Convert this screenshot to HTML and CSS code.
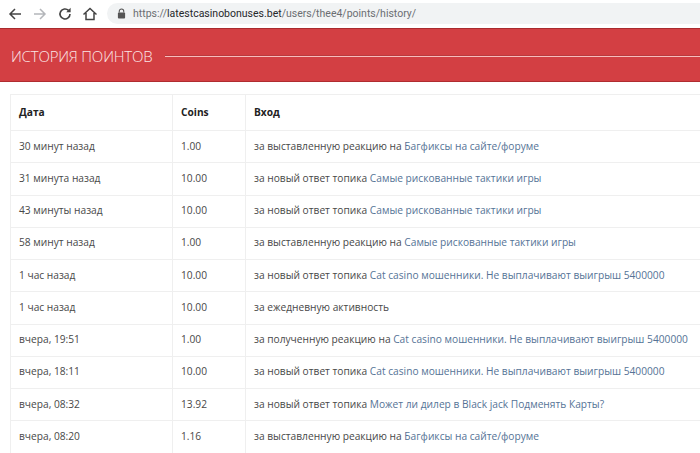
FILE: index.html
```html
<!DOCTYPE html>
<html lang="ru">
<head>
<meta charset="utf-8">
<title>История поинтов</title>
<link rel="stylesheet" href="styles.css">
</head>
<body>
<div class="toolbar">
  <div class="nav">
    <svg class="ico" viewBox="0 0 16 16"><path d="M14 8H3M8 3 3 8l5 5" fill="none" stroke="#444" stroke-width="1.5"/></svg>
    <svg class="ico" viewBox="0 0 16 16"><path d="M2 8h11M8 3l5 5-5 5" fill="none" stroke="#b4b6ba" stroke-width="1.5"/></svg>
    <svg class="ico" viewBox="0 0 16 16"><path d="M13 8a5 5 0 1 1-1.5-3.6" fill="none" stroke="#444" stroke-width="1.6"/><path d="M13.6 1.8v4.4H9.2z" fill="#444"/></svg>
    <svg class="ico" viewBox="0 0 16 16"><path d="M1.5 8.5 8 2.5l6.5 6M4 7v6.5h8V7" fill="none" stroke="#444" stroke-width="1.5"/></svg>
  </div>
  <div class="omnibox">
    <svg class="lock" viewBox="0 0 10 12"><path d="M2.5 5V3.5a2.5 2.5 0 0 1 5 0V5" fill="none" stroke="#555" stroke-width="1.2"/><rect x="1" y="5" width="8" height="6.5" rx="1" fill="#555"/></svg>
    <span class="url">https://<b>latestcasinobonuses.bet</b>/users/thee4/points/history/</span>
  </div>
</div>
<header class="banner">
  <h1>ИСТОРИЯ ПОИНТОВ</h1>
  <span class="rule"></span>
</header>
<main class="content">
  <table class="points">
    <thead>
      <tr><th class="c-date">Дата</th><th class="c-coins">Coins</th><th>Вход</th></tr>
    </thead>
    <tbody>
      <tr><td>30 минут назад</td><td>1.00</td><td>за выставленную реакцию на <a href="#">Багфиксы на сайте/форуме</a></td></tr>
      <tr><td>31 минута назад</td><td>10.00</td><td>за новый ответ топика <a href="#">Самые рискованные тактики игры</a></td></tr>
      <tr><td>43 минуты назад</td><td>10.00</td><td>за новый ответ топика <a href="#">Самые рискованные тактики игры</a></td></tr>
      <tr><td>58 минут назад</td><td>1.00</td><td>за выставленную реакцию на <a href="#">Самые рискованные тактики игры</a></td></tr>
      <tr><td>1 час назад</td><td>10.00</td><td>за новый ответ топика <a href="#">Cat casino мошенники. Не выплачивают выигрыш 5400000</a></td></tr>
      <tr><td>1 час назад</td><td>10.00</td><td>за ежедневную активность</td></tr>
      <tr><td>вчера, 19:51</td><td>1.00</td><td>за полученную реакцию на <a href="#">Cat casino мошенники. Не выплачивают выигрыш 5400000</a></td></tr>
      <tr><td>вчера, 18:11</td><td>10.00</td><td>за новый ответ топика <a href="#">Cat casino мошенники. Не выплачивают выигрыш 5400000</a></td></tr>
      <tr><td>вчера, 08:32</td><td>13.92</td><td>за новый ответ топика <a href="#">Может ли дилер в Black jack Подменять Карты?</a></td></tr>
      <tr><td>вчера, 08:20</td><td>1.16</td><td>за выставленную реакцию на <a href="#">Багфиксы на сайте/форуме</a></td></tr>
    </tbody>
  </table>
</main>
</body>
</html>
```
FILE: styles.css
```css
html, body {
  margin: 0;
  padding: 0;
  height: 453px;
  overflow: hidden;
  background: #fff;
  font-family: "Open Sans", "Liberation Sans", sans-serif;
}
.toolbar {
  display: flex;
  align-items: center;
  height: 28px;
  background: #fff;
}
.nav {
  display: flex;
  gap: 9px;
  padding-left: 7px;
  width: 100px;
  box-sizing: border-box;
}
.ico { width: 16px; height: 16px; flex: none; }
.omnibox {
  display: flex;
  align-items: center;
  flex: 1;
  height: 21px;
  margin: 0 0 1px 7px;
  padding-left: 10px;
  gap: 7px;
  background: #f1f3f4;
  border-radius: 11px 0 0 11px;
}
.lock { width: 9px; height: 11px; flex: none; }
.url {
  font-family: Roboto, "Open Sans", sans-serif;
  font-size: 10.5px;
  color: #6b6e72;
  white-space: nowrap;
}
.url b { font-weight: 400; color: #26282b; }
.banner {
  display: flex;
  align-items: center;
  gap: 13px;
  box-sizing: border-box;
  height: 54px;
  padding: 2px 0 0 11px;
  background: #d33f43;
  border-top: 1px solid #a92b2e;
  border-bottom: 1px solid #b02c30;
}
.banner h1 {
  margin: 0;
  font-size: 15px;
  font-weight: 300;
  letter-spacing: -0.2px;
  color: #fbe6e6;
  white-space: nowrap;
}
.rule {
  flex: 1;
  height: 1px;
  background: #f7bcbc;
  box-shadow: 0 -1px 0 #b93a3d;
}
.content { padding: 12px 0 0 10px; }
.points {
  border-collapse: collapse;
  table-layout: fixed;
  width: 720px;
  font-size: 10.2px;
  color: #484848;
}
.c-date { width: 162px; }
.c-coins { width: 73px; }
.points th, .points td {
  box-sizing: border-box;
  height: 32.25px;
  padding: 0 8px 2px;
  border: 1px solid #efefef;
  text-align: left;
  white-space: nowrap;
}
.points th {
  height: 36px;
  font-weight: 700;
  color: #222;
}
.points a {
  color: #557396;
  text-decoration: none;
}
```
